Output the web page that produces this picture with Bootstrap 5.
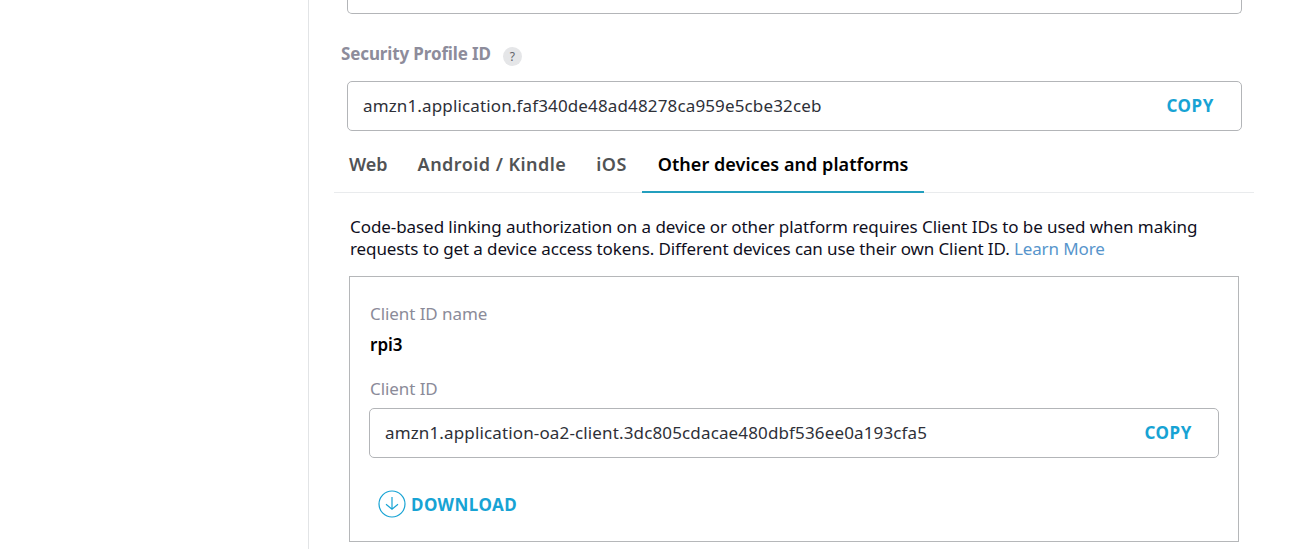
<!DOCTYPE html>
<html lang="en">
<head>
<meta charset="utf-8">
<meta name="viewport" content="width=device-width, initial-scale=1">
<title>Security Profile</title>
<link href="https://cdn.jsdelivr.net/npm/bootstrap@5.3.0/dist/css/bootstrap.min.css" rel="stylesheet">
<style>
  body { font-family: "Noto Sans", "Open Sans", sans-serif; font-size: 17px; line-height: 22px; color: #10101e; background: #fff; }
  .page { height: 549px; }
  .side { width: 309px; border-right: 1px solid #e2e4e6; }
  .content { width: 920px; margin-left: 25px; }
  .field { height: 50px; border: 1px solid #b3b5b8; border-radius: 5px; color: #2e3038; letter-spacing: .14px; }
  .field-outer { margin: 0 12px 0 13px; padding: 0 27px 0 15px; }
  .field-cut { height: 14px; border-top: 0; border-radius: 0 0 5px 5px; }
  .field-inner { padding: 0 26px 0 15px; }
  .action { color: #17a3d4; font-weight: 700; text-decoration: none; letter-spacing: .6px; }
  .profile-label { margin: 29px 0 16px 7px; color: #8d8c9b; font-weight: 700; letter-spacing: -.13px; }
  .help { width: 19px; height: 19px; margin: 4px 0 -1px 12px; background: #e5e6e8; color: #62646a; font-size: 12px; font-weight: 400; line-height: 19px; letter-spacing: 0; }
  .tabs { height: 62px; border-bottom: 1px solid #e9ebed; }
  .tabs .nav-link { height: 62px; padding: 21px 15px 0; color: #515355; font-size: 18px; line-height: 24px; font-weight: 600; border-bottom: 2px solid transparent; }
  .tabs .nav-link.spread { letter-spacing: .45px; }
  .tabs .nav-link.active { color: #000; border-bottom-color: #239fbe; letter-spacing: .05px; padding-left: 16px; }
  .intro { margin: 23px 0 16px 16px; letter-spacing: -.11px; white-space: nowrap; }
  .intro .lead-line { letter-spacing: -.07px; }
  .intro a { color: #5795cc; text-decoration: none; }
  .panel { height: 266px; margin: 0 15px 0 15px; padding: 26px 19px 0; border: 1px solid #b5b7b9; }
  .caption { color: #8b8b99; padding-left: 1px; letter-spacing: -.07px; }
  .name { color: #000; font-weight: 600; margin: 9px 0 22px; padding-left: 1px; }
  .download { margin: 32px 0 0 9px; gap: 5px; letter-spacing: .45px; }
  .download span { padding-top: 1px; }
</style>
</head>
<body>
<div class="page d-flex overflow-hidden">
  <aside class="side flex-shrink-0"></aside>
  <main class="content flex-shrink-0">
    <div class="field field-outer field-cut"></div>
    <div class="profile-label d-flex align-items-center"><span>Security Profile ID</span><span class="help rounded-circle text-center">?</span></div>
    <div class="field field-outer d-flex align-items-center justify-content-between">
      <span>amzn1.application.faf340de48ad48278ca959e5cbe32ceb</span>
      <a class="action" href="#">COPY</a>
    </div>
    <ul class="nav tabs flex-nowrap">
      <li class="nav-item"><a class="nav-link" href="#">Web</a></li>
      <li class="nav-item"><a class="nav-link spread" href="#">Android / Kindle</a></li>
      <li class="nav-item"><a class="nav-link spread" href="#">iOS</a></li>
      <li class="nav-item"><a class="nav-link active" href="#">Other devices and platforms</a></li>
    </ul>
    <p class="intro"><span class="lead-line">Code-based linking authorization on a device or other platform requires Client IDs to be used when making</span><br>requests to get a device access tokens. Different devices can use their own Client ID. <a href="#">Learn More</a></p>
    <section class="panel">
      <div class="caption">Client ID name</div>
      <div class="name">rpi3</div>
      <div class="caption">Client ID</div>
      <div class="field field-inner d-flex align-items-center justify-content-between mt-2">
        <span>amzn1.application-oa2-client.3dc805cdacae480dbf536ee0a193cfa5</span>
        <a class="action" href="#">COPY</a>
      </div>
      <a class="action download d-inline-flex align-items-center" href="#">
        <svg width="28" height="28" viewBox="0 0 28 28" fill="none" stroke="currentColor" stroke-width="1.2"><circle cx="14" cy="14" r="13"/><path d="M14 7v12M8 14.3l6 4.9 6-4.9"/></svg>
        <span>DOWNLOAD</span>
      </a>
    </section>
  </main>
</div>
<script src="https://cdn.jsdelivr.net/npm/bootstrap@5.3.0/dist/js/bootstrap.bundle.min.js"></script>
</body>
</html>
